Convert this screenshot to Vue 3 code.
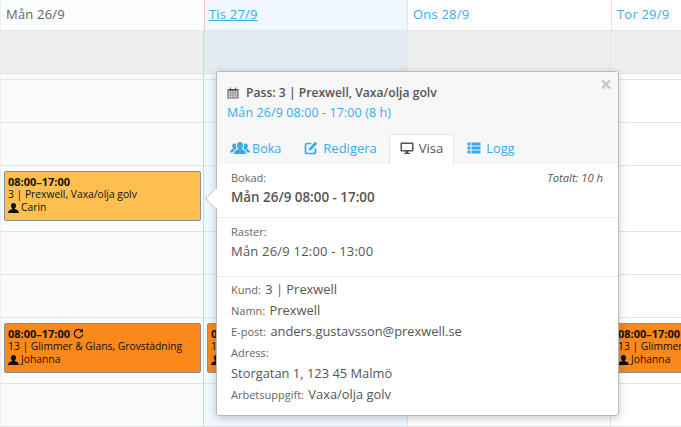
<script setup>
const glimmer = { c: 'orange', t: '08:00–17:00', r: true, d: '13 | Glimmer & Glans, Grovstädning', p: 'Johanna' }
const days = [
  { label: 'Mån 26/9', cls: 'mon', events: { 2: { c: 'yellow', t: '08:00–17:00', d: '3 | Prexwell, Vaxa/olja golv', p: 'Carin' }, 5: glimmer } },
  { label: 'Tis 27/9', cls: 'tue', events: { 5: glimmer } },
  { label: 'Ons 28/9', cls: 'wed', events: {} },
  { label: 'Tor 29/9', cls: 'thu', events: { 5: { ...glimmer, r: false } } }
]
const rows = [43, 43, 66, 43, 43, 66, 43]
</script>

<template>
  <div class="cal">
    <div v-for="day in days" :key="day.label" class="col" :class="day.cls">
      <div class="head"><span>{{ day.label }}</span></div>
      <div class="allday cell"></div>
      <div class="gap cell"></div>
      <div v-for="(h, i) in rows" :key="i" class="row cell" :style="{ height: h + 'px' }">
        <div v-if="day.events[i]" class="ev" :class="day.events[i].c">
          <div class="ev-t">{{ day.events[i].t }}
            <svg v-if="day.events[i].r" class="ic-r" viewBox="0 0 12 12"><path d="M9.6 3.2A4.6 4.6 0 1 0 10.6 6.8" fill="none" stroke="#111" stroke-width="1.3"/><path d="M10.8 .6v4H6.8z" fill="#111"/></svg>
          </div>
          <div>{{ day.events[i].d }}</div>
          <div class="ev-p">
            <svg class="ic-u" viewBox="0 0 12 11"><path d="M6 0c1.800 0 2.800 1.200 2.800 2.900 0 1.200-.6 2.300-1.300 2.900v.9c1.400.5 4.200 1 4.500 4.300H0c.3-3.300 3.100-3.800 4.500-4.300v-.9C3.800 5.200 3.200 4.100 3.200 2.900 3.200 1.200 4.200 0 6 0z" fill="#111"/></svg>
            {{ day.events[i].p }}
          </div>
        </div>
      </div>
    </div>

    <div class="pop">
      <span class="arrow"></span>
      <span class="close">×</span>
      <div class="pop-head">
        <div class="title">
          <svg class="ic" viewBox="0 0 12 12"><path fill="#555" d="M.5 2h11v9.500H.5zM3 .6h1v2.400H3zM8 .6h1v2.400H8z"/><path stroke="#f7f7f7" stroke-width=".7" d="M.5 4.300h11M1 6.200h10M1 8h10M1 9.800h10M2.600 4.300v7M4.800 4.300v7M7 4.300v7M9.200 4.300v7" fill="none"/></svg>
          <b>Pass: 3 | Prexwell, Vaxa/olja golv</b>
        </div>
        <div class="when">Mån 26/9 08:00 - 17:00 (8 h)</div>
        <nav class="tabs">
          <a class="tab boka">
            <svg class="ti wide" viewBox="0 0 20 14"><path fill="#3aa9e8" d="M10 1c2 0 3 1.500 3 3.200 0 1.300-.6 2.500-1.300 3.100v1c1.500.4 4 1 4.300 4.700H4c.3-3.700 2.800-4.300 4.300-4.700v-1C7.600 6.700 7 5.500 7 4.200 7 2.500 8 1 10 1zM4.500 2.500c.6 0 1.100.2 1.500.5-.4 1.400-.1 3 .8 4.200v.6c-1.500.5-3.400 1.400-3.700 3.700H0c.2-2.500 1.900-3 3-3.400v-.8c-.5-.5-.9-1.300-.9-2.300 0-1.400.8-2.500 2.400-2.500zM15.500 2.500c1.600 0 2.400 1.100 2.400 2.500 0 1-.4 1.800-.9 2.300v.8c1.100.4 2.800.9 3 3.400h-3.100c-.3-2.300-2.200-3.200-3.700-3.700v-.6c.9-1.200 1.200-2.800.8-4.200.4-.3.900-.5 1.500-.5z"/></svg>
            <span>Boka</span>
          </a>
          <a class="tab">
            <svg class="ti" viewBox="0 0 14 14"><path fill="none" stroke="#3aa9e8" stroke-width="1.700" d="M11.500 7.500v3.200c0 1-.8 1.800-1.800 1.800H3.300c-1 0-1.800-.8-1.800-1.800V4.300c0-1 .8-1.800 1.800-1.800h4"/><path fill="#3aa9e8" d="M11.200.8l2 2-6 6.200-2.700.7.700-2.700z"/></svg>
            <span>Redigera</span>
          </a>
          <a class="tab active">
            <svg class="ti" viewBox="0 0 14 14"><path fill="#555" d="M1.300 1.500h11.400c.5 0 .8.300.8.800v7.400c0 .5-.3.800-.8.800H8.500v1.500h1.500v1H4v-1h1.500V10.500H1.300c-.5 0-.8-.3-.8-.8V2.300c0-.5.3-.8.800-.8zM2 3v6h10V3z"/></svg>
            <span>Visa</span>
          </a>
          <a class="tab logg">
            <svg class="ti" viewBox="0 0 14 14"><path fill="#3aa9e8" d="M.5 1.500h3v3h-3zM4.500 1.500h9v3h-9zM.5 5.500h3v3h-3zM4.500 5.500h9v3h-9zM.5 9.500h3v3h-3zM4.500 9.500h9v3h-9z"/></svg>
            <span>Logg</span>
          </a>
        </nav>
      </div>
      <div class="sec s1">
        <div class="top"><small>Bokad:</small><i>Totalt: 10 h</i></div>
        <div class="big">Mån 26/9 08:00 - 17:00</div>
      </div>
      <div class="sec s2">
        <small>Raster:</small>
        <div class="val">Mån 26/9 12:00 - 13:00</div>
      </div>
      <div class="sec s3">
        <div class="line"><small>Kund:</small> 3 | Prexwell</div>
        <div class="line"><small>Namn:</small> Prexwell</div>
        <div class="line"><small>E-post:</small> anders.gustavsson@prexwell.se</div>
        <div class="line"><small>Adress:</small></div>
        <div class="line">Storgatan 1, 123 45 Malmö</div>
        <div class="line"><small>Arbetsuppgift:</small> Vaxa/olja golv</div>
      </div>
    </div>
  </div>
</template>

<style scoped>
.cal { position: relative; display: flex; width: 681px; height: 427px; overflow: hidden; background: #fff; font-family: "Open Sans", sans-serif; color: #555; }
.col { flex: 0 0 204px; box-sizing: border-box; background: #fff; }
.col.thu { flex: 0 0 69px; }
.col.mon { background: #fafbfb; border-left: 1px solid #eceeef; }
.col.tue { background: #f0f8ff; }
.head { box-sizing: border-box; height: 31px; padding: 6px 0 0 5px; font-size: 13px; line-height: 17px; letter-spacing: .2px; color: #38aceb; border-bottom: 1px solid #e2e4e6; border-right: 1px solid #e3e5e7; background: #fff; }
.mon .head { color: #666; background: #fcfdfd; border-right: 0; }
.tue .head { background: #f0f8ff; border-left: 1px solid #f4c5c5; padding-left: 4px; }
.tue .head span { text-decoration: underline; }
.thu .head { border-right: 0; }
.cell { box-sizing: border-box; border-bottom: 1px solid #e2e4e6; border-right: 1px solid #e3e5e7; }
.mon .cell { border-right-color: #f4c5c5; }
.wed .cell { width: 203px; }
.thu .cell { margin-left: -1px; border-right: 0; background: #fff; }
.allday { height: 43px; background: #eeefef; }
.thu .allday { background: #eeefef; }
.tue .allday { background: #e3eaf2; }
.gap { height: 6px; }
.row { padding: 5px 2px 0 3px; }
.ev { box-sizing: border-box; height: 50px; padding: 3px 3px 0; border: 1px solid #8f8f8f; border-radius: 2px; font-size: 10.3px; line-height: 13px; color: #111; white-space: nowrap; overflow: hidden; }
.thu .row { padding-right: 0; }
.ev.yellow { background: #fdbf4f; }
.ev.orange { background: #fa881a; }
.ev-t { font-weight: 700; font-size: 11px; display: flex; align-items: center; gap: 3px; }
.ev-p { display: flex; align-items: center; gap: 2px; }
.ic-r { width: 11px; height: 11px; }
.ic-u { width: 11px; height: 10px; }
.pop { position: absolute; left: 216px; top: 71px; box-sizing: border-box; width: 403px; height: 345px; background: #fff; border: 1px solid #bbb; border-radius: 3px; box-shadow: 0 2px 8px rgba(0,0,0,.22); font-size: 12.9px; color: #555; }
.arrow { position: absolute; left: -9px; top: 119px; width: 14px; height: 14px; transform: rotate(45deg); background: #fff; border-left: 1px solid #c8c8c8; border-bottom: 1px solid #c8c8c8; }
.close { position: absolute; right: 6px; top: 2px; font-size: 21px; line-height: 20px; font-weight: 700; color: #c8c8c8; }
.pop-head { box-sizing: border-box; height: 92px; padding: 12px 0 0 10px; background: #f7f7f7; border-radius: 3px 3px 0 0; }
.title { display: flex; align-items: center; gap: 7px; line-height: 17px; font-size: 12.15px; }
.title b { font-weight: 600; }
.ic { width: 12px; height: 12px; }
.when { margin-top: 3px; line-height: 17px; color: #38aceb; font-size: 12.5px; letter-spacing: .1px; }
.tabs { display: flex; margin: 13px 0 0 -9px; height: 31px; }
.tab { box-sizing: border-box; display: flex; align-items: center; gap: 5px; padding: 0 11px 3px; height: 30px; color: #38aceb; font-size: 13px; border: 1px solid transparent; border-bottom: 0; }
.tab.boka { gap: 2px; padding: 0 10px 3px 11px; font-size: 12.6px; }
.tab.logg { padding-left: 12px; font-size: 12.8px; }
.tab.active { color: #555; background: #fff; border-color: #e4e4e4; border-radius: 4px 4px 0 0; padding: 0 10px 3px; }
.ti { width: 14px; height: 14px; }
.ti.wide { width: 20px; }
.sec { padding: 0 14px; line-height: 17px; }
.sec + .sec { border-top: 1px solid #eee; }
.s1 { height: 53px; padding: 5px 15px 0 14px; box-sizing: border-box; }
small { font-size: 11px; color: #666; }
.top { display: flex; justify-content: space-between; align-items: center; }
.top i { font-size: 11.2px; }
.big { margin-top: 3px; font-weight: 600; font-size: 13.4px; }
.s2 { height: 59px; padding-top: 5px; box-sizing: border-box; }
.val { margin-top: 3px; font-size: 13px; letter-spacing: .2px; }
.s3 { padding-top: 3px; }
.s3 small { margin-right: 1px; }
.line { height: 21px; line-height: 18px; }
</style>
